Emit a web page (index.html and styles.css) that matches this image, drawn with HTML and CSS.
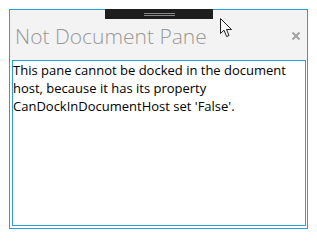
FILE: index.html
```html
<!DOCTYPE html>
<html lang="en">
<head>
  <meta charset="UTF-8">
  <meta name="viewport" content="width=device-width, initial-scale=1.0">
  <title>Not Document Pane</title>
  <link rel="stylesheet" href="styles.css">
</head>
<body>
  <div class="pane">
    <div class="pane-header">
      <span class="pane-title">Not Document Pane</span>
      <button class="pane-close" title="Close">
        <svg width="10" height="10" viewBox="0 0 10 10">
          <path d="M1.5 1.5 L8.5 8.5 M8.5 1.5 L1.5 8.5" stroke="#a0a0a0" stroke-width="2" fill="none"/>
        </svg>
      </button>
    </div>
    <div class="pane-content">This pane cannot be docked in the document host, because it has its property CanDockInDocumentHost set 'False'.</div>
    <div class="drag-handle"><span class="grip"></span></div>
    <svg class="cursor" width="14" height="20" viewBox="0 0 14 20">
      <path d="M0.5 0.5 L0.5 15.5 L4 12.2 L6.6 18.5 L9 17.5 L6.5 11.5 L11.5 11.5 Z" fill="#fff" stroke="#222" stroke-width="1" stroke-linejoin="miter"/>
    </svg>
  </div>
</body>
</html>
```

FILE: styles.css
```css
body {
  margin: 0;
  background-color: #fff;
  font-family: "Open Sans", "Noto Sans", sans-serif;
}
.pane {
  position: relative;
  box-sizing: border-box;
  width: 299px;
  height: 220px;
  margin: 9px 0 0 9px;
  border: 1px solid #25a0da;
  display: flex;
  flex-direction: column;
}
.pane-header {
  height: 50px;
  background-color: #f3f3f3;
  display: flex;
  align-items: center;
  padding: 0 6px 0 5px;
}
.pane-title {
  flex: 1;
  font-weight: 300;
  font-size: 21px;
  color: #999;
  margin-top: 1px;
}
.pane-close {
  border: none;
  background: none;
  padding: 0;
  width: 10px;
  height: 10px;
  display: flex;
  align-items: center;
  justify-content: center;
  margin-top: 2px;
}
.pane-content {
  flex: 1;
  margin: 0 1px 2px 2px;
  border: 1px solid #25a0da;
  font-size: 13px;
  line-height: 18px;
  color: #000;
  padding: 0 2px 0 0;
}
.drag-handle {
  position: absolute;
  left: 95px;
  top: -1px;
  width: 108px;
  height: 10px;
  background-color: #1e1e1e;
  display: flex;
  align-items: center;
  justify-content: center;
}
.grip {
  width: 31px;
  height: 1px;
  border-top: 1px solid #888;
  border-bottom: 1px solid #888;
}
.cursor {
  position: absolute;
  left: 210px;
  top: 8px;
}
```
